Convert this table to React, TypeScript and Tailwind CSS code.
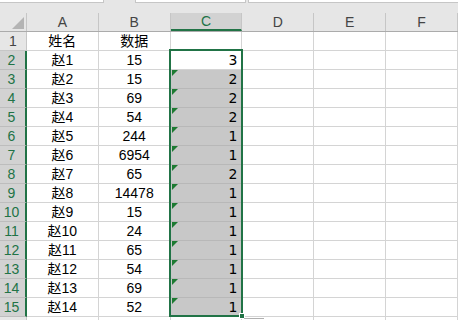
import React from 'react';

const rows = [
  { name: '姓名', val: '数据', c: '' },
  { name: '赵1', val: '15', c: '3' },
  { name: '赵2', val: '15', c: '2' },
  { name: '赵3', val: '69', c: '2' },
  { name: '赵4', val: '54', c: '2' },
  { name: '赵5', val: '244', c: '1' },
  { name: '赵6', val: '6954', c: '1' },
  { name: '赵7', val: '65', c: '2' },
  { name: '赵8', val: '14478', c: '1' },
  { name: '赵9', val: '15', c: '1' },
  { name: '赵10', val: '24', c: '1' },
  { name: '赵11', val: '65', c: '1' },
  { name: '赵12', val: '54', c: '1' },
  { name: '赵13', val: '69', c: '1' },
  { name: '赵14', val: '52', c: '1' },
  { name: '', val: '', c: '' },
];

const cols = ['A', 'B', 'C', 'D', 'E', 'F'];

const Corner = () => (
  <svg width="12" height="12" viewBox="0 0 12 12" className="absolute left-[12px] top-[4px]">
    <polygon points="12,0 12,12 0,12" fill="#b4b4b4" />
  </svg>
);

const ErrMark = () => (
  <svg width="6" height="6" viewBox="0 0 6 6" className="absolute left-[1px] top-0">
    <polygon points="0,0 6,0 0,6" fill="#1d7a32" />
  </svg>
);

export default function App() {
  return (
    <div
      className="relative w-[458px] h-[320px] overflow-hidden bg-white text-[14px] text-black"
      style={{ fontFamily: '"Liberation Sans", "Noto Sans CJK SC", sans-serif' }}
    >
      {/* formula bar remnant */}
      <div className="h-[13px] bg-[#e6e6e6] flex items-start">
        <div className="w-[104px] h-[3px] bg-white border-r border-b border-[#c6c6c6]" />
        <div className="w-[31px]" />
        <div className="w-[111px] h-[3px] bg-white border-l border-r border-b border-[#c6c6c6]" />
        <div className="w-[2px]" />
        <div className="flex-1 h-[3px] bg-white border-l border-b border-[#c6c6c6]" />
      </div>

      {/* column headers */}
      <div className="flex h-[19px] bg-[#e6e6e6] border-b border-[#ababab]">
        <div className="relative w-[27px] h-full border-r border-[#c6c6c6]">
          <Corner />
        </div>
        {cols.map((c) =>
          c === 'C' ? (
            <div
              key={c}
              className="w-[72px] h-full flex items-center justify-center bg-[#d2d2d2] border-r border-[#c6c6c6] border-b-2 border-b-[#217346] text-[#217346]"
            >
              {c}
            </div>
          ) : (
            <div
              key={c}
              className="w-[72px] h-full flex items-center justify-center border-r border-[#c6c6c6] text-[#444]"
            >
              {c}
            </div>
          )
        )}
      </div>

      {/* body rows */}
      {rows.map((r, i) => {
        const n = i + 1;
        const sel = n >= 2 && n <= 15;
        return (
          <div key={n} className="flex h-[19px]">
            {sel ? (
              <div className="w-[27px] h-full flex items-center justify-center pt-[1px] pr-[2px] bg-[#d2d2d2] border-b border-[#bdbdbd] border-r-2 border-r-[#217346] text-[#217346]">
                {n}
              </div>
            ) : (
              <div className="w-[27px] h-full flex items-center justify-center pt-[1px] bg-[#e6e6e6] border-b border-r border-[#c6c6c6] text-[#444]">
                {n <= 15 ? n : ''}
              </div>
            )}
            <div className="w-[72px] h-full flex items-center justify-center pt-[1px] border-r border-b border-[#d4d4d4]">
              {r.name}
            </div>
            <div className="w-[72px] h-full flex items-center justify-center pt-[1px] border-r border-b border-[#d4d4d4]">
              {r.val}
            </div>
            {n >= 3 && n <= 15 ? (
              <div
                className="relative w-[72px] h-full flex items-center justify-end pt-[1px] pr-[4px] bg-[#c8c8c8] border-r border-b border-[#b8b8b8]"
                style={{ fontFamily: '"DejaVu Sans", sans-serif', fontSize: 14 }}
              >
                <ErrMark />
                {r.c}
              </div>
            ) : (
              <div
                className="w-[72px] h-full flex items-center justify-end pt-[1px] pr-[4px] border-r border-b border-[#d4d4d4]"
                style={{ fontFamily: '"DejaVu Sans", sans-serif', fontSize: 14 }}
              >
                {r.c}
              </div>
            )}
            <div className="w-[72px] h-full border-r border-b border-[#d4d4d4]" />
            <div className="w-[72px] h-full border-r border-b border-[#d4d4d4]" />
            <div className="w-[72px] h-full border-r border-b border-[#d4d4d4]" />
          </div>
        );
      })}

      {/* selection outline over C2:C15 */}
      <div className="absolute left-[169px] top-[49px] w-[74px] h-[268px] border-2 border-[#217346] pointer-events-none" />
      <div className="absolute left-[239px] top-[313px] w-[6px] h-[6px] bg-[#217346] border border-white" />
      <div className="absolute left-[244px] top-[318px] w-[20px] h-[2px] border-t border-[#b0b0b0]" />
    </div>
  );
}
